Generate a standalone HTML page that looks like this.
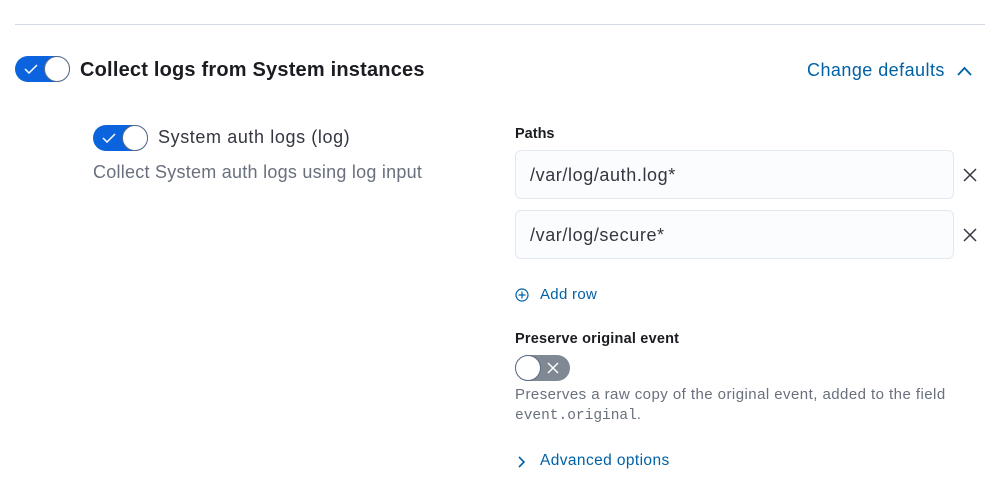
<!DOCTYPE html>
<html><head><style>
body{margin:0;width:995px;height:486px;background:#fff;font-family:"Liberation Sans",sans-serif;position:relative;overflow:hidden}
.a{position:absolute;white-space:nowrap}
.tg{position:absolute;width:55px;height:26px;border-radius:13px;background:#0b64dd}
.tg .k{position:absolute;right:0;top:0;width:24px;height:24px;border:1px solid #5a6b86;border-radius:50%;background:#fff}
.tg.off{background:#808893}
.tg.off .k{left:0;right:auto}
.in{position:absolute;left:515px;width:439px;height:49px;border:1px solid #e3e8f0;border-radius:6px;background:#fbfcfd;font-size:18px;letter-spacing:0.6px;color:#343741;line-height:49px;box-sizing:border-box;padding-left:14px}
.blue{color:#0061a6}
</style></head><body>
<div class="a" style="left:15px;top:24px;width:970px;height:1px;background:#d3dae6"></div>

<div class="tg" style="left:15px;top:56px"><svg class="a" style="left:9px;top:8px" width="14" height="10"><path d="M1 5l4 4 8-8" stroke="#fff" stroke-width="1.5" fill="none"/></svg><div class="k"></div></div>
<div class="a" style="left:80px;top:59px;font-size:20px;letter-spacing:0.2px;font-weight:bold;color:#1a1c21">Collect logs from System instances</div>
<div class="a blue" style="left:807px;top:60px;font-size:18px;letter-spacing:0.45px">Change defaults</div>
<svg class="a" style="left:956px;top:65px" width="17" height="12"><path d="M2 10l6.5-7 6.5 7" stroke="#0061a6" stroke-width="1.8" fill="none"/></svg>

<div class="tg" style="left:93px;top:125px"><svg class="a" style="left:9px;top:8px" width="14" height="10"><path d="M1 5l4 4 8-8" stroke="#fff" stroke-width="1.5" fill="none"/></svg><div class="k"></div></div>
<div class="a" style="left:158px;top:127px;font-size:18px;letter-spacing:0.6px;color:#343741">System auth logs (log)</div>
<div class="a" style="left:93px;top:162px;font-size:18px;letter-spacing:0.25px;color:#69707d">Collect System auth logs using log input</div>

<div class="a" style="left:515px;top:126px;font-size:14.5px;font-weight:bold;color:#1a1c21">Paths</div>
<div class="in" style="top:150px">/var/log/auth.log*</div>
<div class="in" style="top:210px">/var/log/secure*</div>
<svg class="a" style="left:963px;top:168px" width="14" height="14"><path d="M1 1l12 12M13 1L1 13" stroke="#343741" stroke-width="1.5"/></svg>
<svg class="a" style="left:963px;top:228px" width="14" height="14"><path d="M1 1l12 12M13 1L1 13" stroke="#343741" stroke-width="1.5"/></svg>

<svg class="a" style="left:515px;top:288px" width="14" height="14"><circle cx="7" cy="7" r="6" stroke="#0061a6" fill="none" stroke-width="1.2"/><path d="M7 3.5v7M3.5 7h7" stroke="#0061a6" stroke-width="1.2"/></svg>
<div class="a blue" style="left:540px;top:286px;font-size:15px;letter-spacing:0.3px">Add row</div>

<div class="a" style="left:515px;top:331px;font-size:14.5px;letter-spacing:0.2px;font-weight:bold;color:#1a1c21">Preserve original event</div>
<div class="tg off" style="left:515px;top:355px"><svg class="a" style="left:32px;top:7px" width="12" height="12"><path d="M1 1l10 10M11 1L1 11" stroke="#fff" stroke-width="1.5"/></svg><div class="k"></div></div>
<div class="a" style="left:515px;top:386px;font-size:15px;letter-spacing:0.45px;color:#69707d">Preserves a raw copy of the original event, added to the field</div>
<div class="a" style="left:515px;top:407px;font-size:14.5px;color:#69707d"><span style="font-family:'Liberation Mono',monospace">event.original</span>.</div>

<svg class="a" style="left:517px;top:455px" width="10" height="14"><path d="M2 2l5 5-5 5" stroke="#0061a6" stroke-width="1.6" fill="none"/></svg>
<div class="a blue" style="left:540px;top:452px;font-size:15.5px;letter-spacing:0.4px">Advanced options</div>
</body></html>
